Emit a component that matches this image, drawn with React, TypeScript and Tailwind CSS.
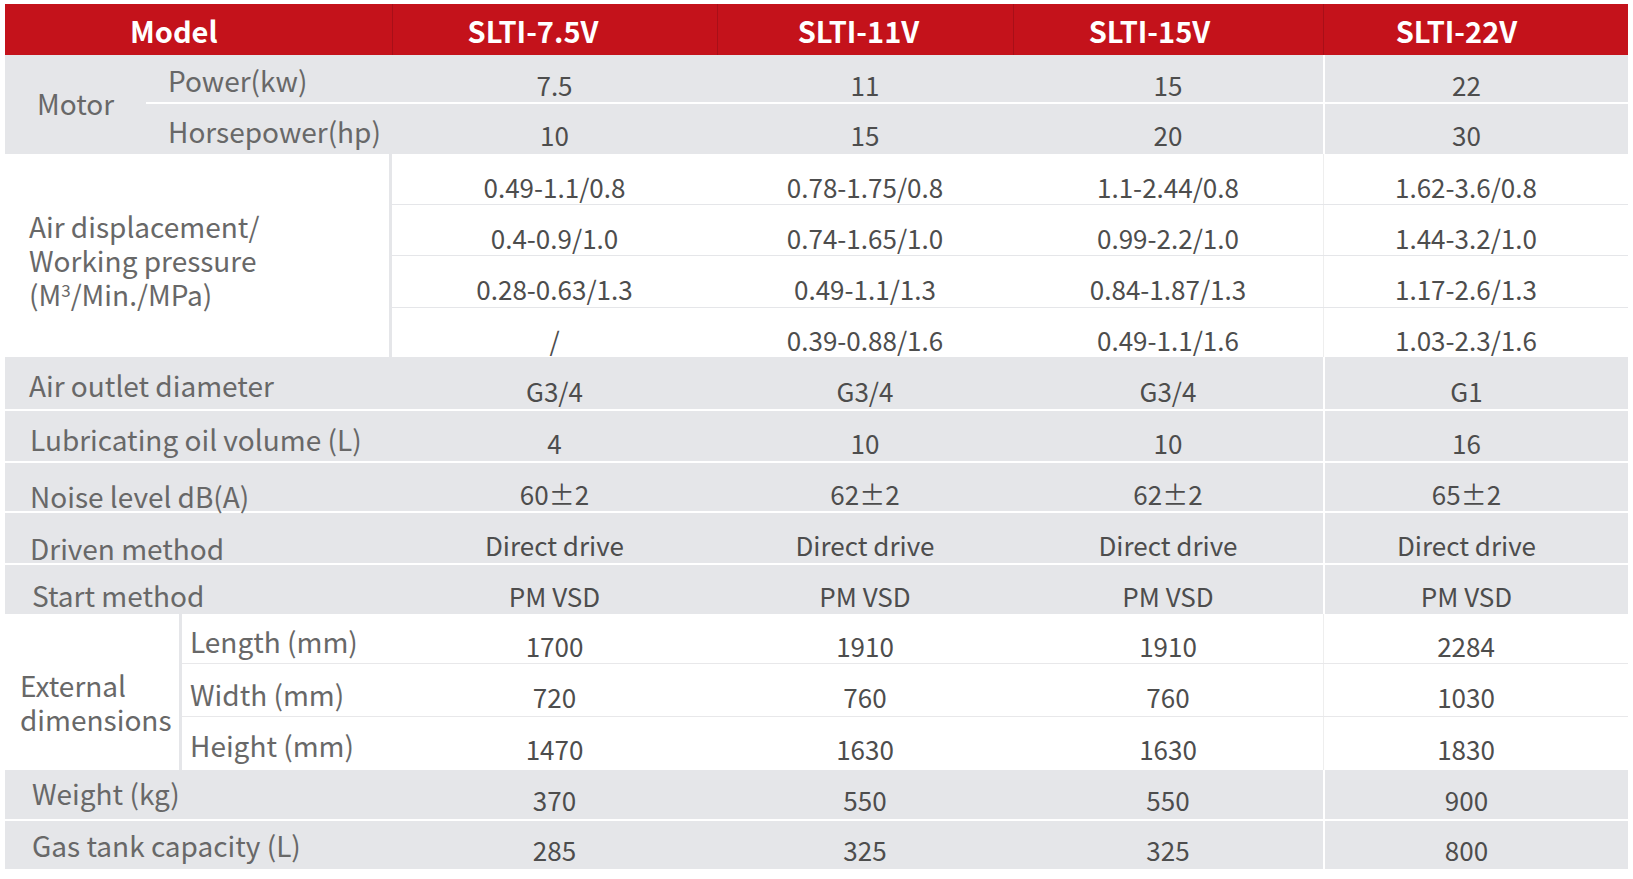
import React from 'react';

const COLW = ['w-[325px]', 'w-[296px]', 'w-[310px]', 'w-[305px] pr-[20px]'];

function Cells({ vals, gray, pt = 'pt-[13px]' }: { vals: string[]; gray: boolean; pt?: string }) {
  return (
    <>
      {vals.map((v, i) => (
        <div
          key={i}
          className={`${COLW[i]} flex items-center justify-center ${pt} text-[26px] text-[#4d4d4d] whitespace-nowrap ${
            i === 3 ? (gray ? 'border-l-2 border-white' : 'border-l border-[#eeeeee]') : ''
          }`}
        >
          {v}
        </div>
      ))}
    </>
  );
}

function GrayRow({
  label,
  vals,
  h,
  pl,
  lpt,
  top,
  pt,
}: {
  label: string;
  vals: string[];
  h: string;
  pl: string;
  lpt: string;
  top: boolean;
  pt?: string;
}) {
  return (
    <div className={`flex ${h} bg-[#e5e6e9] ${top ? 'border-t-2 border-white' : ''}`}>
      <div className={`w-[387px] flex items-center ${pl} ${lpt} text-[#686868] whitespace-nowrap`}>{label}</div>
      <Cells vals={vals} gray pt={pt} />
    </div>
  );
}

export default function App() {
  return (
    <div className="w-[1633px] h-[879px] bg-white pt-[4px] pl-[5px] font-['Noto_Sans_CJK_SC','Noto_Sans',sans-serif] text-[28px] leading-none">
      <div className="w-[1623px]">
        {/* Header */}
        <div className="flex h-[51px] bg-[#c4121b] text-white font-bold text-[29px]">
          <div className="w-[387px] flex items-center pl-[125px] pt-[2px]">Model</div>
          <div className="w-[325px] flex items-center justify-center pr-[44px] pt-[2px] border-l border-[#a80f18]">SLTI-7.5V</div>
          <div className="w-[296px] flex items-center justify-center pr-[14px] pt-[2px] border-l border-[#a80f18]">SLTI-11V</div>
          <div className="w-[310px] flex items-center justify-center pr-[38px] pt-[2px] border-l border-[#a80f18]">SLTI-15V</div>
          <div className="w-[305px] flex items-center justify-center pr-[39px] pt-[2px] border-l border-[#a80f18]">SLTI-22V</div>
        </div>

        {/* Motor */}
        <div className="flex h-[99px] bg-[#e5e6e9]">
          <div className="w-[141px] flex items-center pl-[32px] pb-[3px] text-[#686868]">Motor</div>
          <div className="flex flex-col">
            <div className="flex h-[47px]">
              <div className="w-[246px] flex items-center pl-[22px] pt-[2px] text-[#686868] whitespace-nowrap">Power(kw)</div>
              <Cells vals={['7.5', '11', '15', '22']} gray pt="pt-[12px]" />
            </div>
            <div className="flex h-[52px] border-t-2 border-white">
              <div className="w-[246px] flex items-center pl-[22px] pt-[4px] text-[#686868] whitespace-nowrap">Horsepower(hp)</div>
              <Cells vals={['10', '15', '20', '30']} gray pt="pt-[12px]" />
            </div>
          </div>
        </div>

        {/* Air displacement */}
        <div className="flex h-[203px] bg-white">
          <div className="w-[387px] border-r-[3px] border-[#e5e6e9] flex flex-col justify-center pl-[24px] pt-[14px] text-[#686868] leading-[34px]">
            <div>Air displacement/</div>
            <div>Working pressure</div>
            <div className="whitespace-nowrap">
              (M<span className="relative top-[-9px] text-[17px]">3</span>/Min./MPa)
            </div>
          </div>
          <div className="flex flex-col">
            <div className="flex h-[50px]">
              <Cells vals={['0.49-1.1/0.8', '0.78-1.75/0.8', '1.1-2.44/0.8', '1.62-3.6/0.8']} gray={false} pt="pt-[15px]" />
            </div>
            <div className="flex h-[51px] border-t border-[#e5e6e9]">
              <Cells vals={['0.4-0.9/1.0', '0.74-1.65/1.0', '0.99-2.2/1.0', '1.44-3.2/1.0']} gray={false} pt="pt-[15px]" />
            </div>
            <div className="flex h-[52px] border-t border-[#e5e6e9]">
              <Cells vals={['0.28-0.63/1.3', '0.49-1.1/1.3', '0.84-1.87/1.3', '1.17-2.6/1.3']} gray={false} pt="pt-[15px]" />
            </div>
            <div className="flex h-[50px] border-t border-[#e5e6e9]">
              <Cells vals={['/', '0.39-0.88/1.6', '0.49-1.1/1.6', '1.03-2.3/1.6']} gray={false} pt="pt-[15px]" />
            </div>
          </div>
        </div>

        <GrayRow label="Air outlet diameter" vals={['G3/4', 'G3/4', 'G3/4', 'G1']} h="h-[52px]" pl="pl-[24px]" lpt="pt-[3px]" top={false} pt="pt-[15px]" />
        <GrayRow label="Lubricating oil volume (L)" vals={['4', '10', '10', '16']} h="h-[52px]" pl="pl-[25px]" lpt="pt-[5px]" top />
        <GrayRow label="Noise level dB(A)" vals={['60±2', '62±2', '62±2', '65±2']} h="h-[50px]" pl="pl-[25px]" lpt="pt-[18px]" top />
        <GrayRow label="Driven method" vals={['Direct drive', 'Direct drive', 'Direct drive', 'Direct drive']} h="h-[52px]" pl="pl-[25px]" lpt="pt-[20px]" top />
        <GrayRow label="Start method" vals={['PM VSD', 'PM VSD', 'PM VSD', 'PM VSD']} h="h-[51px]" pl="pl-[27px]" lpt="pt-[10px]" top />

        {/* External dimensions */}
        <div className="flex h-[156px] bg-white">
          <div className="w-[177px] border-r-[3px] border-[#e5e6e9] flex flex-col justify-center pl-[15px] pt-[19px] text-[#686868] leading-[34px]">
            <div>External</div>
            <div>dimensions</div>
          </div>
          <div className="flex flex-col">
            <div className="flex h-[49px]">
              <div className="w-[210px] flex items-center pl-[8px] pt-[4px] text-[#686868] whitespace-nowrap">Length (mm)</div>
              <Cells vals={['1700', '1910', '1910', '2284']} gray={false} pt="pt-[15px]" />
            </div>
            <div className="flex h-[53px] border-t border-[#e8e8ea]">
              <div className="w-[210px] flex items-center pl-[8px] pt-[8px] text-[#686868] whitespace-nowrap">Width (mm)</div>
              <Cells vals={['720', '760', '760', '1030']} gray={false} />
            </div>
            <div className="flex h-[54px] border-t border-[#e8e8ea]">
              <div className="w-[210px] flex items-center pl-[8px] pt-[2px] text-[#686868] whitespace-nowrap">Height (mm)</div>
              <Cells vals={['1470', '1630', '1630', '1830']} gray={false} pt="pt-[10px]" />
            </div>
          </div>
        </div>

        <GrayRow label="Weight (kg)" vals={['370', '550', '550', '900']} h="h-[49px]" pl="pl-[27px]" lpt="pb-[4px]" top={false} pt="pt-[10px]" />
        <GrayRow label="Gas tank capacity (L)" vals={['285', '325', '325', '800']} h="h-[50px]" pl="pl-[27px]" lpt="pt-[0px]" top pt="pt-[10px]" />
      </div>
    </div>
  );
}
